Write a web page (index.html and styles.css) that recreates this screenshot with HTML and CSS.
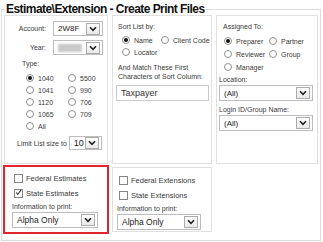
FILE: index.html
```html
<!DOCTYPE html>
<html lang="en">
<head>
    <meta charset="UTF-8">
    <title>Estimate\Extension - Create Print Files</title>
    <link rel="stylesheet" href="styles.css">
</head>
<body>
    <fieldset class="panel">
        <legend>Estimate\Extension - Create Print Files</legend>
        <div class="grid">
            <div class="box top filters">
                <div class="field">
                    <span class="label">Account:</span>
                    <div class="select small"><span class="value">2W8F</span><span class="arrow"><svg viewBox="0 0 8 6" width="8" height="6"><path d="M1 1.2 L4 4.4 L7 1.2" fill="none" stroke="#222" stroke-width="1.6"/></svg></span></div>
                </div>
                <div class="field">
                    <span class="label">Year:</span>
                    <div class="select small"><span class="value"><span class="blur"></span></span><span class="arrow"><svg viewBox="0 0 8 6" width="8" height="6"><path d="M1 1.2 L4 4.4 L7 1.2" fill="none" stroke="#222" stroke-width="1.6"/></svg></span></div>
                </div>
                <div class="caption type">Type:</div>
                <div class="radios">
                    <label class="opt"><span class="radio on"></span>1040</label>
                    <label class="opt"><span class="radio"></span>5500</label>
                    <label class="opt"><span class="radio"></span>1041</label>
                    <label class="opt"><span class="radio"></span>990</label>
                    <label class="opt"><span class="radio"></span>1120</label>
                    <label class="opt"><span class="radio"></span>706</label>
                    <label class="opt"><span class="radio"></span>1065</label>
                    <label class="opt"><span class="radio"></span>709</label>
                    <label class="opt"><span class="radio"></span>All</label>
                </div>
                <div class="limit">
                    <span>Limit List size to</span>
                    <div class="select tiny"><span class="value big">10</span><span class="arrow"><svg viewBox="0 0 8 6" width="8" height="6"><path d="M1 1.2 L4 4.4 L7 1.2" fill="none" stroke="#222" stroke-width="1.6"/></svg></span></div>
                </div>
            </div>

            <div class="box top sort">
                <div class="caption">Sort List by:</div>
                <div class="pair">
                    <label class="opt"><span class="radio on"></span>Name</label>
                    <label class="opt"><span class="radio"></span>Client Code</label>
                    <label class="opt"><span class="radio"></span>Locator</label>
                </div>
                <div class="caption match">And Match These First<br>Characters of Sort Column:</div>
                <div class="textbox">Taxpayer</div>
            </div>

            <div class="box top assigned">
                <div class="caption">Assigned To:</div>
                <div class="pair">
                    <label class="opt"><span class="radio on"></span>Preparer</label>
                    <label class="opt"><span class="radio"></span>Partner</label>
                    <label class="opt"><span class="radio"></span>Reviewer</label>
                    <label class="opt"><span class="radio"></span>Group</label>
                    <label class="opt"><span class="radio"></span>Manager</label>
                </div>
                <div class="caption loc">Location:</div>
                <div class="select wide"><span class="value">(All)</span><span class="arrow"><svg viewBox="0 0 8 6" width="8" height="6"><path d="M1 1.2 L4 4.4 L7 1.2" fill="none" stroke="#222" stroke-width="1.6"/></svg></span></div>
                <div class="caption login">Login ID/Group Name:</div>
                <div class="select wide"><span class="value">(All)</span><span class="arrow"><svg viewBox="0 0 8 6" width="8" height="6"><path d="M1 1.2 L4 4.4 L7 1.2" fill="none" stroke="#222" stroke-width="1.6"/></svg></span></div>
            </div>

            <div class="box bottom estimates">
                <label class="check-row"><span class="check"></span>Federal Estimates</label>
                <label class="check-row"><span class="check"><svg viewBox="0 0 9 9" width="9" height="9"><path d="M1.5 4.5 L3.6 7 L7.8 1.2" fill="none" stroke="#333" stroke-width="1.4"/></svg></span>State Estimates</label>
                <div class="caption info">Information to print:</div>
                <div class="select print"><span class="value mid">Alpha Only</span><span class="arrow"><svg viewBox="0 0 8 6" width="8" height="6"><path d="M1 1.2 L4 4.4 L7 1.2" fill="none" stroke="#222" stroke-width="1.6"/></svg></span></div>
            </div>

            <div class="box bottom extensions">
                <label class="check-row"><span class="check"></span>Federal Extensions</label>
                <label class="check-row"><span class="check"></span>State Extensions</label>
                <div class="caption info">Information to print:</div>
                <div class="select print"><span class="value mid">Alpha Only</span><span class="arrow"><svg viewBox="0 0 8 6" width="8" height="6"><path d="M1 1.2 L4 4.4 L7 1.2" fill="none" stroke="#222" stroke-width="1.6"/></svg></span></div>
            </div>
        </div>
    </fieldset>
</body>
</html>
```

FILE: styles.css
```css
body, html {
    margin: 0;
    padding: 0;
    background-color: white;
    font-family: Arial, "Liberation Sans", sans-serif;
    font-size: 7px;
    color: #3a3a3a;
}
.panel {
    margin: 2px 0 0 1px;
    padding: 0 2px 6px;
    width: 320px;
    box-sizing: border-box;
    border: 1px solid #dcdcdc;
    min-width: 0;
}
.panel legend {
    padding: 0 1px;
    margin-left: 1px;
    font-size: 12px;
    line-height: 14px;
    font-weight: bold;
    letter-spacing: -0.55px;
    color: #111;
}
.grid {
    display: grid;
    grid-template-columns: 104px 100px 102px;
    column-gap: 4px;
    row-gap: 2px;
    margin-top: -1px;
}
.box {
    border: 1px solid #e0e0e0;
    box-sizing: border-box;
}
.top {
    height: 149px;
}
.caption {
    line-height: 9px;
}

/* selects */
.select {
    display: flex;
    align-items: center;
    justify-content: space-between;
    height: 15px;
    box-sizing: border-box;
    border: 1px solid #bdbdbd;
    background-color: white;
    padding: 0 2px 0 4px;
}
.select .value {
    font-size: 8px;
    color: #222;
}
.select .value.big {
    font-size: 9px;
}
.select .value.mid {
    font-size: 8.5px;
}
.arrow {
    display: flex;
    align-items: center;
    justify-content: center;
    width: 12px;
    height: 10px;
    border: 1px solid #ababab;
    background: linear-gradient(#fdfdfd, #e9e9e9);
}
.blur {
    display: block;
    width: 24px;
    height: 8px;
    background-color: #c8c8c8;
    filter: blur(1.2px);
}

/* radios and checks */
.opt {
    display: flex;
    align-items: center;
    gap: 4px;
    height: 12px;
    white-space: nowrap;
}
.radio {
    width: 8px;
    height: 8px;
    box-sizing: border-box;
    border: 1px solid #8f8f8f;
    border-radius: 50%;
    background-color: white;
    position: relative;
}
.radio.on::after {
    content: "";
    position: absolute;
    left: 1px;
    top: 1px;
    width: 4px;
    height: 4px;
    border-radius: 50%;
    background-color: #111;
}
.check-row {
    display: flex;
    align-items: center;
    gap: 3px;
    height: 12px;
    margin: 0 0 3px 2px;
    font-size: 7.5px;
}
.check {
    width: 9px;
    height: 9px;
    box-sizing: border-box;
    border: 1px solid #858585;
    background-color: white;
    display: flex;
    align-items: center;
    justify-content: center;
}
.check svg {
    margin-top: -2px;
}

/* left box */
.filters {
    padding: 5px 0 0 5px;
}
.field {
    display: flex;
    align-items: center;
    gap: 7px;
    margin-bottom: 4px;
}
.field .label {
    width: 36px;
    text-align: right;
}
.select.small {
    width: 50px;
}
.type {
    margin: 0 0 4px 12px;
}
.radios {
    display: grid;
    grid-template-columns: 42px 40px;
    padding-left: 16px;
}
.limit {
    display: flex;
    align-items: center;
    gap: 2px;
    margin: 4px 0 0 7px;
}
.select.tiny {
    width: 33px;
    height: 14px;
}

/* sort box */
.sort {
    padding: 6px 0 0 5px;
}
.pair {
    display: grid;
    grid-template-columns: 39px 50px;
    padding: 3px 0 0 4px;
}
.assigned .pair {
    grid-template-columns: 45px 50px;
    padding: 4px 0 0 5px;
    row-gap: 1px;
}
.match {
    margin: 5px 0 4px;
}
.textbox {
    margin-left: -2px;
    width: 93px;
    height: 16px;
    box-sizing: border-box;
    border: 1px solid #cbcbcb;
    padding: 0 4px;
    line-height: 14px;
    font-size: 9px;
    color: #333;
}

/* assigned box */
.assigned {
    padding: 6px 4px 0 2px;
}
.assigned > .caption:first-child {
    margin-left: 4px;
}
.loc {
    margin-top: 2px;
    margin-bottom: 1px;
}
.login {
    margin-top: 4px;
    margin-bottom: 1px;
}
.select.wide {
    width: 94px;
    height: 16px;
}

/* bottom boxes */
.bottom {
    align-self: start;
}
.estimates {
    margin: -1px -1px 0;
    height: 69px;
    border: 2px solid #e0262c;
    padding: 5px 0 0 7px;
}
.extensions {
    margin-top: 1px;
    height: 65px;
    padding: 6px 0 0 4px;
}
.info {
    margin: 0 0 1px;
}
.select.print {
    width: 86px;
    height: 16px;
}
.extensions .select.print {
    width: 84px;
}
```
